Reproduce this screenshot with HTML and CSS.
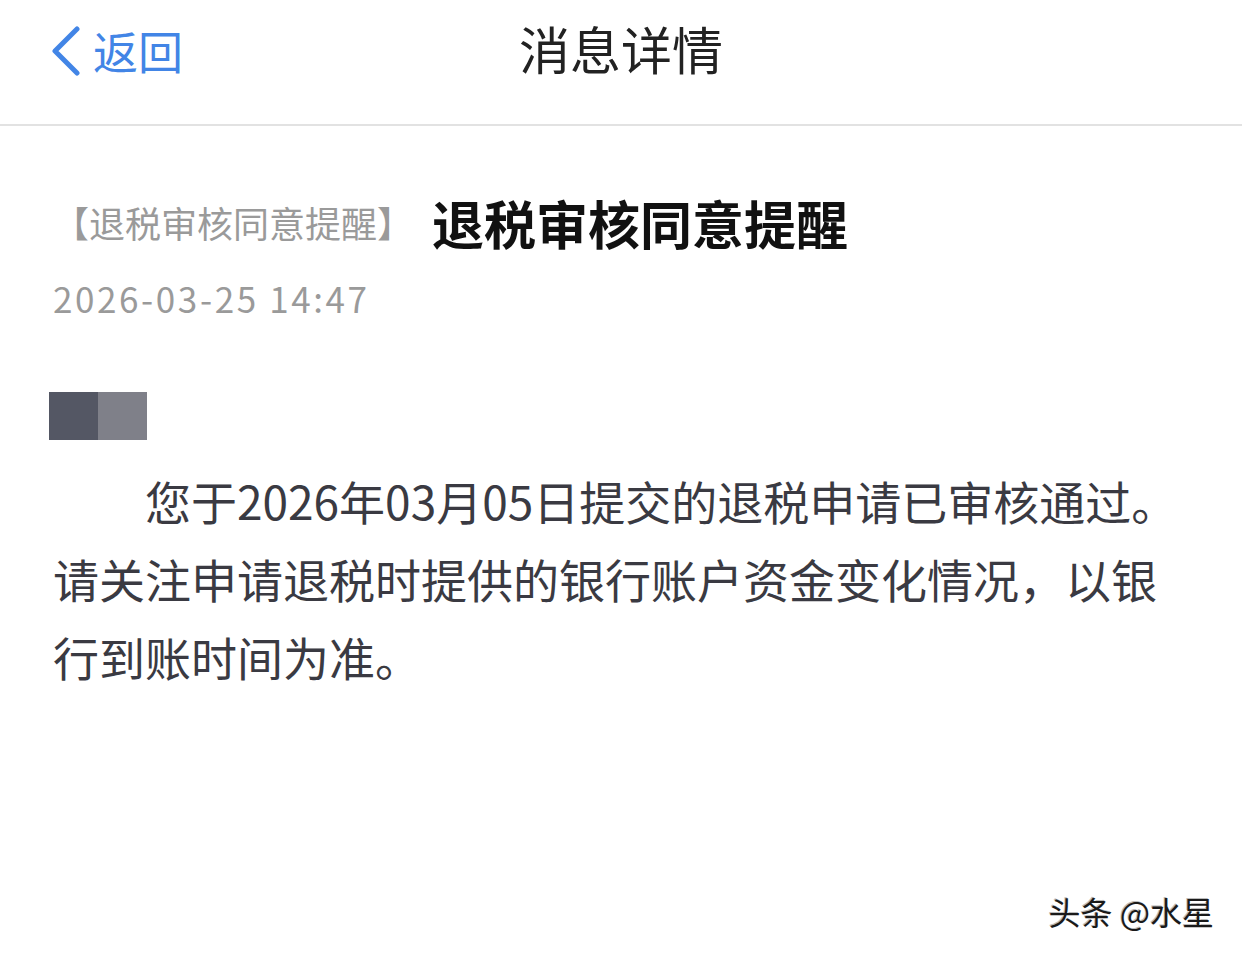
FILE: index.html
```html
<!DOCTYPE html>
<html lang="zh-CN">
<head>
    <meta charset="UTF-8">
    <title>消息详情</title>
    <link rel="stylesheet" href="styles.css">
</head>
<body>
    <div class="navbar">
        <div class="back">
            <svg class="back-icon" width="32" height="50" viewBox="0 0 32 50">
                <path d="M28 3 L6 25 L28 47" fill="none" stroke="#4285e6" stroke-width="5" stroke-linecap="round" stroke-linejoin="round"/>
            </svg>
            <span class="back-text">返回</span>
        </div>
        <div class="nav-title">消息详情</div>
    </div>

    <div class="content">
        <div class="msg-head">
            <span class="msg-tag">【退税审核同意提醒】</span>
            <span class="msg-title">退税审核同意提醒</span>
        </div>
        <div class="msg-time">2026-03-25 14:47</div>

        <div class="avatar">
            <span class="avatar-a"></span>
            <span class="avatar-b"></span>
        </div>

        <p class="msg-body">您于2026年03月05日提交的退税申请已审核通过。请关注申请退税时提供的银行账户资金变化情况，以银行到账时间为准。</p>
    </div>

    <div class="watermark">头条 @水星</div>
</body>
</html>
```

FILE: styles.css
```css
body {
    margin: 0;
    background: #fff;
    font-family: "Noto Sans CJK SC", "Noto Sans", sans-serif;
    color: #222;
    height: 958px;
    position: relative;
    overflow: hidden;
}
.navbar {
    height: 124px;
    border-bottom: 2px solid #e2e2e2;
    position: relative;
}
.back {
    position: absolute;
    left: 49px;
    top: 26px;
    display: flex;
    align-items: center;
}
.back-icon {
    display: block;
}
.back-text {
    margin-left: 12px;
    font-size: 45px;
    line-height: 50px;
    color: #4285e6;
}
.nav-title {
    text-align: center;
    font-size: 51px;
    line-height: 96px;
    color: #222;
}
.content {
    padding: 0 53px;
}
.msg-head {
    margin-top: 66px;
    display: flex;
    align-items: center;
    height: 60px;
}
.msg-tag {
    font-size: 36px;
    color: #9a9a9a;
}
.msg-title {
    font-size: 52px;
    font-weight: 700;
    color: #111;
    margin-left: 19px;
}
.msg-time {
    margin-top: 26px;
    font-size: 35px;
    line-height: 40px;
    color: #9a9a9a;
    letter-spacing: 2.6px;
}
.avatar {
    margin-top: 74px;
    margin-left: -4px;
    display: flex;
}
.avatar span {
    width: 49px;
    height: 48px;
}
.avatar-a {
    background: #545764;
}
.avatar-b {
    background: #7f8089;
}
.msg-body {
    margin: 21px 0 0;
    font-size: 46px;
    line-height: 78px;
    text-indent: 2em;
    color: #3a3a42;
}
.watermark {
    position: absolute;
    right: 28px;
    bottom: 24px;
    font-size: 32px;
    color: #1a1a1a;
    text-shadow: 1px 1px 0 #fff, -1px -1px 0 #bbb;
}
```
